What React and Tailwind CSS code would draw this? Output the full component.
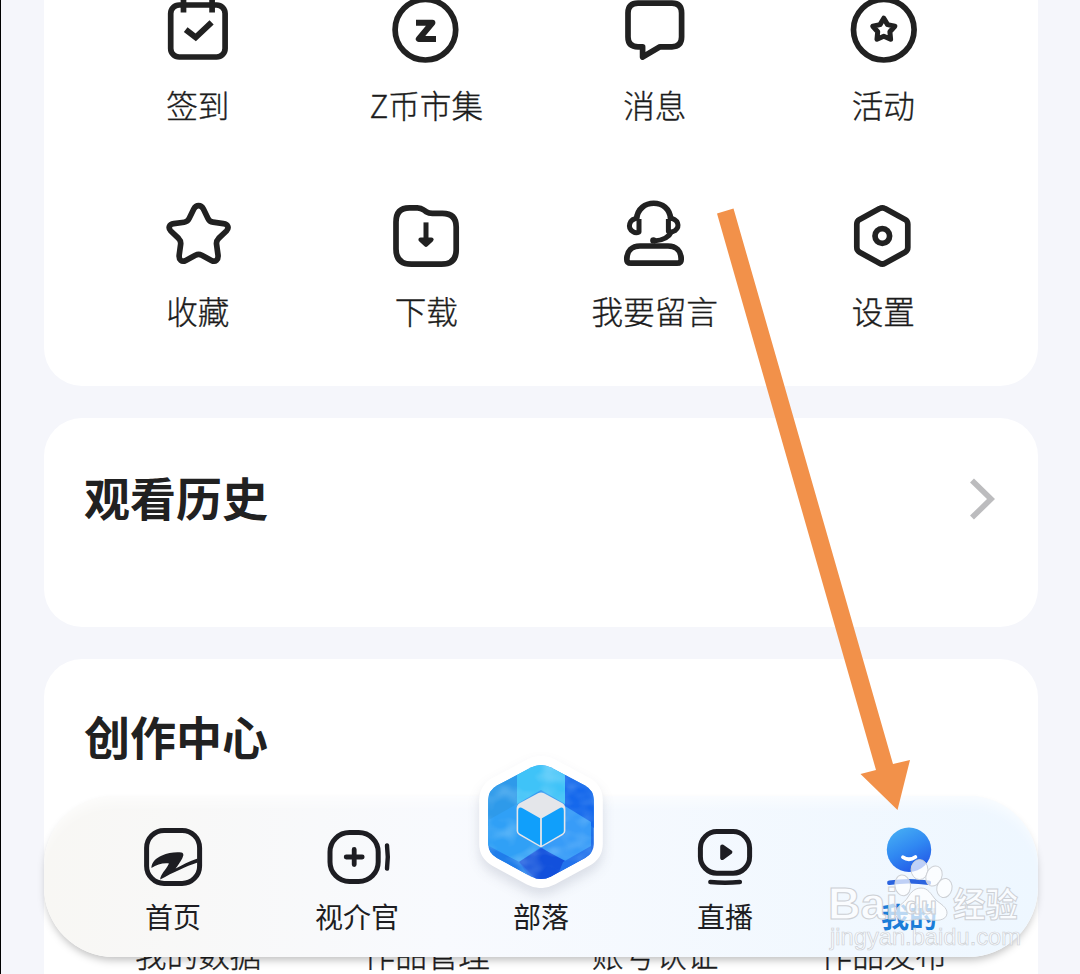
import { useId } from 'react'

const line = {
  fill: 'none',
  stroke: '#212121',
  strokeWidth: 5.7,
  strokeLinejoin: 'round',
}

function starPoints(cx, cy, outer, inner) {
  return Array.from({ length: 10 }, (_, i) => {
    const radius = i % 2 === 0 ? outer : inner
    const angle = (Math.PI / 5) * i - Math.PI / 2
    return `${(cx + radius * Math.cos(angle)).toFixed(2)},${(cy + radius * Math.sin(angle)).toFixed(2)}`
  }).join(' ')
}

// Every menu icon is drawn around its own centre
function MenuIcon({ children }) {
  return (
    <svg viewBox="-38 -38 76 76" className="size-[76px]" {...line}>
      {children}
    </svg>
  )
}

function CheckInIcon() {
  return (
    <MenuIcon>
      <rect x="-27.3" y="-25" width="54.4" height="52" rx="8.5" />
      <path d="M-14.5 -36V-17.4M14.1 -36V-17.4" />
      <path d="M-12.3 -0.4L-2.3 7.4L13.6 -7.6" strokeLinejoin="miter" strokeWidth="6" />
    </MenuIcon>
  )
}

function CoinIcon() {
  return (
    <MenuIcon>
      <circle cx="-1.6" cy="-0.3" r="30.3" />
      <path d="M-11 -7.2H5.4L-8.2 9H9" strokeWidth="6" />
    </MenuIcon>
  )
}

function MessageIcon() {
  return (
    <MenuIcon>
      <path d="M-17 -26.8H17Q26.6 -26.8 26.6 -17V7Q26.6 16.8 17 16.8H5L-12.4 27V16.8H-17Q-27 16.8 -27 7V-17Q-27 -26.8 -17 -26.8Z" />
    </MenuIcon>
  )
}

function ActivityIcon() {
  return (
    <MenuIcon>
      <circle cx="-0.2" cy="-0.3" r="30.3" />
      <polygon points={starPoints(-0.2, -0.2, 11.6, 6.4)} strokeWidth="5" />
    </MenuIcon>
  )
}

function FavoriteIcon() {
  return (
    <MenuIcon>
      <path d="M0.6 -30.4C3 -30.4 4.4 -29 5.4 -27L10 -17.6Q11.6 -14.2 15 -13.8L25.4 -12.4C30 -11.8 31.4 -8 28.4 -5L20.6 2.4Q18 5 18.6 8.6L20 19C20.6 24 17.4 26.6 13.4 24.4L3.8 19.2Q0.6 17.6 -2.6 19.2L-12.2 24.4C-16.2 26.6 -19.4 24 -18.8 19L-17.4 8.6Q-16.8 5 -19.4 2.4L-27.2 -5C-30.2 -8 -28.8 -11.8 -24.2 -12.4L-13.8 -13.8Q-10.4 -14.2 -8.8 -17.6L-4.2 -27C-3.2 -29 -1.8 -30.4 0.6 -30.4Z" />
    </MenuIcon>
  )
}

function DownloadIcon() {
  return (
    <MenuIcon>
      <path d="M-17.6 -28.2H-9.6Q-6.2 -28.2 -3.2 -26L-0.6 -24.2Q1.8 -22.6 5.4 -22.6H15.4Q29.2 -22.6 29.2 -9V14Q29.2 28.2 14.4 28.2H-15.6Q-31 28.2 -31 13V-14Q-31 -28.2 -17.6 -28.2Z" />
      <path d="M-1 -13.6V9" strokeWidth="5" />
      <path d="M-6.4 3.6L-1 8.6L4.4 3.6Z" fill="#212121" strokeWidth="4.4" />
    </MenuIcon>
  )
}

function ServiceIcon() {
  return (
    <MenuIcon>
      <path d="M-18.4 -17C-17 -38 14.6 -38 15.6 -17" />
      <path d="M-16 -17V-4Q-19 -2.4 -22 -4.4C-27.8 -8 -26.8 -17.4 -16 -18" strokeWidth="5" />
      <path d="M13.4 -17V-4.4Q16.4 -3.4 20 -5.4C25 -9 24 -17.4 13.4 -18" strokeWidth="5" />
      <path d="M17 -5Q13 4 -1 5" strokeWidth="5" />
      <circle cx="-1.6" cy="4.4" r="3.2" fill="#212121" stroke="none" />
      <path d="M-15 10H13C21 10 26.2 15 26.2 23.4Q26.2 27.2 22 27.2H-24Q-28.2 27.2 -28.2 23.4C-28.2 15 -23 10 -15 10Z" />
    </MenuIcon>
  )
}

function SettingsIcon() {
  return (
    <MenuIcon>
      <path d="M-4.4 -27.4Q-1.7 -29 1 -27.4L21 -16.6Q23.8 -15 23.8 -11.8V11.6Q23.8 14.6 21 16.2L1 27.2Q-1.7 28.8 -4.4 27.2L-24.4 16.2Q-27.2 14.6 -27.2 11.6V-11.8Q-27.2 -15 -24.4 -16.6Z" />
      <circle cx="-1.7" cy="0" r="7.3" />
    </MenuIcon>
  )
}

function NavIcon({ children }) {
  return (
    <svg viewBox="-36 -36 72 72" className="size-[72px]" {...line} stroke="#1d1d22" strokeWidth="5">
      {children}
    </svg>
  )
}

function HomeIcon() {
  return (
    <NavIcon>
      <rect x="-26.4" y="-26.6" width="53" height="53" rx="17.5" />
      <path
        d="M-21.6 11C-21.6 5 -17 1 -11 -1.6C-5 -4 3 -5.4 8.4 -4.4C11 -3.6 10.8 -1.4 9.2 1.4C7 5.2 5 8.4 2.6 11.6C9 8.4 16 4 24.6 1.6V5.6C14 9 0 15.6 -12.8 22.6C-12.6 17.4 -7.4 13.4 -4 6.6C-10 5.6 -16 8 -21.6 11Z"
        fill="#1d1d22"
        stroke="none"
      />
    </NavIcon>
  )
}

function VideoIcon() {
  return (
    <NavIcon>
      <rect x="-27" y="-24.4" width="48.2" height="48.8" rx="19.5" />
      <path d="M-10.8 0H5.2M-2.8 -7.6V7.6" strokeLinecap="round" strokeWidth="4.8" />
      <path d="M30 -11.6Q31.6 0 30 11.6" strokeLinecap="round" strokeWidth="4.4" />
    </NavIcon>
  )
}

function LiveIcon() {
  return (
    <NavIcon>
      <rect x="-24.6" y="-25.4" width="49.2" height="41.6" rx="16.5" />
      <path d="M-2.8 -10.6L5.4 -4.8L-2.8 1Z" fill="#1d1d22" strokeWidth="4" />
      <path d="M-14.6 25Q0 26.6 14.8 25" strokeLinecap="round" strokeWidth="4.6" />
    </NavIcon>
  )
}

function MineIcon() {
  const id = useId()
  return (
    <NavIcon>
      <defs>
        <linearGradient id={id} x1="0.2" y1="0" x2="0.7" y2="1">
          <stop offset="0" stopColor="#46aef4" />
          <stop offset="0.5" stopColor="#3088f2" />
          <stop offset="1" stopColor="#2357e6" />
        </linearGradient>
      </defs>
      <circle cx="0" cy="-7.3" r="22.2" fill={`url(#${id})`} stroke="none" />
      <path d="M-6 0.2Q0 4.4 6.4 0" stroke="#fff" strokeLinecap="round" strokeWidth="3.8" />
      <path d="M-19.6 25.8Q0 22.6 19.8 25.8" stroke="#2a63df" strokeLinecap="round" strokeWidth="4.6" />
    </NavIcon>
  )
}

function TribeIcon() {
  const id = useId()
  const hexagon =
    'M-10 -54.4Q0 -59.6 10 -54.4L44 -36.4Q52.8 -31.4 52.8 -22V22Q52.8 31 44 36L10 54.4Q0 59.6 -10 54.4L-44 36Q-52.8 31 -52.8 22V-22Q-52.8 -31.4 -44 -36.4Z'
  return (
    <svg viewBox="-72 -73 144 144" className="-mt-[72px] size-36 overflow-visible">
      <defs>
        <linearGradient id={`${id}g`} x1="0" y1="0" x2="0.35" y2="1">
          <stop offset="0" stopColor="#35a2f0" />
          <stop offset="0.55" stopColor="#2c93f3" />
          <stop offset="1" stopColor="#155be3" />
        </linearGradient>
        <clipPath id={`${id}c`}>
          <path d={hexagon} />
        </clipPath>
        {/* brushed texture laid over the facets */}
        <filter id={`${id}t`} x="0" y="0" width="1" height="1">
          <feTurbulence type="fractalNoise" baseFrequency="0.04 0.06" numOctaves="2" seed="4" />
          <feColorMatrix values="0 0 0 0 0.6  0 0 0 0 0.85  0 0 0 0 1  1.8 0 0 0 -0.75" />
        </filter>
      </defs>
      <path
        d={hexagon}
        fill="#fff"
        stroke="#fff"
        strokeWidth="18"
        strokeLinejoin="round"
        className="drop-shadow-[0_7px_6px_rgba(30,40,70,0.13)]"
      />
      <g clipPath={`url(#${id}c)`}>
        <rect x="-60" y="-62" width="120" height="124" fill={`url(#${id}g)`} />
        <path d="M-24 -60H24V-18L0 -32L-24 -18Z" fill="#3fc3f8" />
        <path d="M24 -50L56 -34V8L24 -14Z" fill="#1568ec" />
        <path d="M-56 -34L-24 -50V-12L-56 6Z" fill="#2e9aea" />
        <path d="M-56 0L-24 -18V12L0 25L-22 40L-56 22Z" fill="#30a0f6" />
        <path d="M24 -16L50 0V32L22 40L0 25L24 12Z" fill="#389cf8" />
        <path d="M-22 40L0 26L30 42L0 62Z" fill="#1250dc" />
        <path d="M22 40L50 24V40L14 60Z" fill="#2272ec" />
        <path d="M-52 26L-22 40L-8 60H-52Z" fill="#1f7dea" />
        <rect x="-60" y="-62" width="120" height="124" filter={`url(#${id}t)`} opacity="0.4" />
      </g>
      <path d="M-3 -28.8Q0 -30.4 3 -28.8L21 -19Q24.4 -17 24.4 -13.2V9Q24.4 11.6 22 13L0 25.6L-22 13Q-24.4 11.6 -24.4 9V-13.2Q-24.4 -17 -21 -19Z" fill="#e4e6ea" />
      <path d="M-0.9 -3.8V23.4L-21.4 11.6Q-22.8 10.8 -22.8 9V-11Q-22.8 -16 -18 -13.6Z" fill="#109ffb" />
      <path d="M0.9 -3.8V23.4L21.4 11.6Q22.8 10.8 22.8 9V-11Q22.8 -16 18 -13.6Z" fill="#109ffb" />
    </svg>
  )
}

const menuItems = [
  { label: '签到', Icon: CheckInIcon },
  { label: 'Z币市集', Icon: CoinIcon },
  { label: '消息', Icon: MessageIcon },
  { label: '活动', Icon: ActivityIcon },
  { label: '收藏', Icon: FavoriteIcon },
  { label: '下载', Icon: DownloadIcon },
  { label: '我要留言', Icon: ServiceIcon },
  { label: '设置', Icon: SettingsIcon },
]

const creatorItems = ['我的数据', '作品管理', '账号认证', '作品发布']

const navItems = [
  { label: '首页', Icon: HomeIcon },
  { label: '视介官', Icon: VideoIcon },
  { label: '部落', Icon: TribeIcon },
  { label: '直播', Icon: LiveIcon },
  { label: '我的', Icon: MineIcon, active: true },
]

function MenuCard() {
  return (
    <section className="-mt-10 grid grid-cols-4 gap-y-[74px] rounded-[38px] bg-white px-10 pt-8 pb-14">
      {menuItems.map(({ label, Icon }) => (
        <div key={label} className="flex flex-col items-center gap-4">
          <Icon />
          <span className="mr-px text-[31.6px] leading-10 font-light whitespace-nowrap text-[#1c1c1c] [-webkit-text-stroke:0.35px_#1c1c1c]">
            {label}
          </span>
        </div>
      ))}
    </section>
  )
}

function HistoryCard() {
  return (
    <section className="flex h-[209px] items-start justify-between rounded-[38px] bg-white pt-12 pr-[40px] pl-10">
      <h2 className="text-[46px] leading-[60px] font-bold text-[#212121]">观看历史</h2>
      <svg viewBox="0 0 32 60" className="mt-[3px] h-[60px] w-8" fill="none" stroke="#bcbcbe" strokeWidth="5.6">
        <path d="M6 11.4L25 30L6 48.6" />
      </svg>
    </section>
  )
}

function CreatorCard() {
  return (
    <section className="rounded-[38px] bg-white px-10 pt-[46px] pb-10">
      <h2 className="text-[46px] leading-[60px] font-bold text-[#212121]">创作中心</h2>
      <div className="mt-[168px] grid grid-cols-4">
        {creatorItems.map((label) => (
          <span
            key={label}
            className="text-center text-[31.6px] leading-10 font-light text-[#1c1c1c] [-webkit-text-stroke:0.35px_#1c1c1c]"
          >
            {label}
          </span>
        ))}
      </div>
    </section>
  )
}

function BottomNav() {
  return (
    <nav className="absolute top-[796px] left-[43px] flex h-[161px] w-[994px] rounded-[70px] bg-linear-to-r from-[#f8f7f4] via-[#f8fafe] via-40% to-[#eef7ff] px-[37px] pt-[25px] shadow-[0_5px_8px_-2px_rgba(0,0,0,0.26),inset_0_14px_14px_-8px_rgba(255,255,255,0.7)]">
      {navItems.map(({ label, Icon, active }) => (
        <div key={label} className="flex flex-1 flex-col items-center gap-[5px]">
          <Icon />
          <span className={`text-[28px] leading-9 ${active ? 'font-bold text-[#1c7dd8]' : 'font-normal text-[#1d1d22]'}`}>
            {label}
          </span>
        </div>
      ))}
    </nav>
  )
}

function PointerArrow() {
  return (
    <svg viewBox="0 0 200 610" className="pointer-events-none absolute top-[205px] left-[711px] h-[610px] w-[200px]">
      <polygon points="5,8.5 21.5,3.5 181,559 198,555 185.5,605 148.5,569 164,565" fill="#f2914a" />
    </svg>
  )
}

function Watermark() {
  return (
    <svg
      viewBox="0 0 210 100"
      className="pointer-events-none absolute top-[856px] left-[821px] h-[100px] w-[210px]"
      fill="#fff"
      fillOpacity="0.7"
      stroke="#cdd0d5"
      strokeWidth="1"
      fontFamily="'Liberation Sans', 'Noto Sans CJK SC', sans-serif"
    >
      <ellipse cx="97.5" cy="13.6" rx="8.4" ry="10" />
      <ellipse cx="112" cy="20" rx="7.8" ry="10.4" transform="rotate(22 112 20)" />
      <ellipse cx="80.7" cy="29.4" rx="7.8" ry="10.4" transform="rotate(-8 80.7 29.4)" />
      <ellipse cx="122.4" cy="32" rx="7.6" ry="9.6" transform="rotate(12 122.4 32)" />
      <path d="M99 32C106 32 109 38 113 43C118 48 125.4 51 125 57.4C124.4 65 114 65 106 63.6C100 62.8 96 63 90 64C81 65.6 73 64 73.4 56.6C74 50 82 48 86 41C89 36 93 32 99 32Z" />
      <text x="6" y="62.5" fontSize="44" fontWeight="700" textLength="70" lengthAdjust="spacingAndGlyphs">Bai</text>
      <text x="83" y="58" fontSize="23" fontWeight="700" textLength="32" lengthAdjust="spacingAndGlyphs">du</text>
      <text x="131" y="60.5" fontSize="34" fontWeight="700" textLength="65" lengthAdjust="spacingAndGlyphs">经验</text>
      <text x="8" y="89" fontSize="24" strokeWidth="0.7" textLength="191" lengthAdjust="spacingAndGlyphs">jingyan.baidu.com</text>
    </svg>
  )
}

export default function App() {
  return (
    <div
      lang="zh-CN"
      className="relative h-[974px] w-[1080px] overflow-hidden border-l border-black bg-[#f5f6fb] font-['Noto_Sans_CJK_SC',sans-serif]"
    >
      <main className="ml-[43px] flex w-[994px] flex-col gap-8">
        <MenuCard />
        <HistoryCard />
        <CreatorCard />
      </main>
      <BottomNav />
      <PointerArrow />
      <Watermark />
    </div>
  )
}
